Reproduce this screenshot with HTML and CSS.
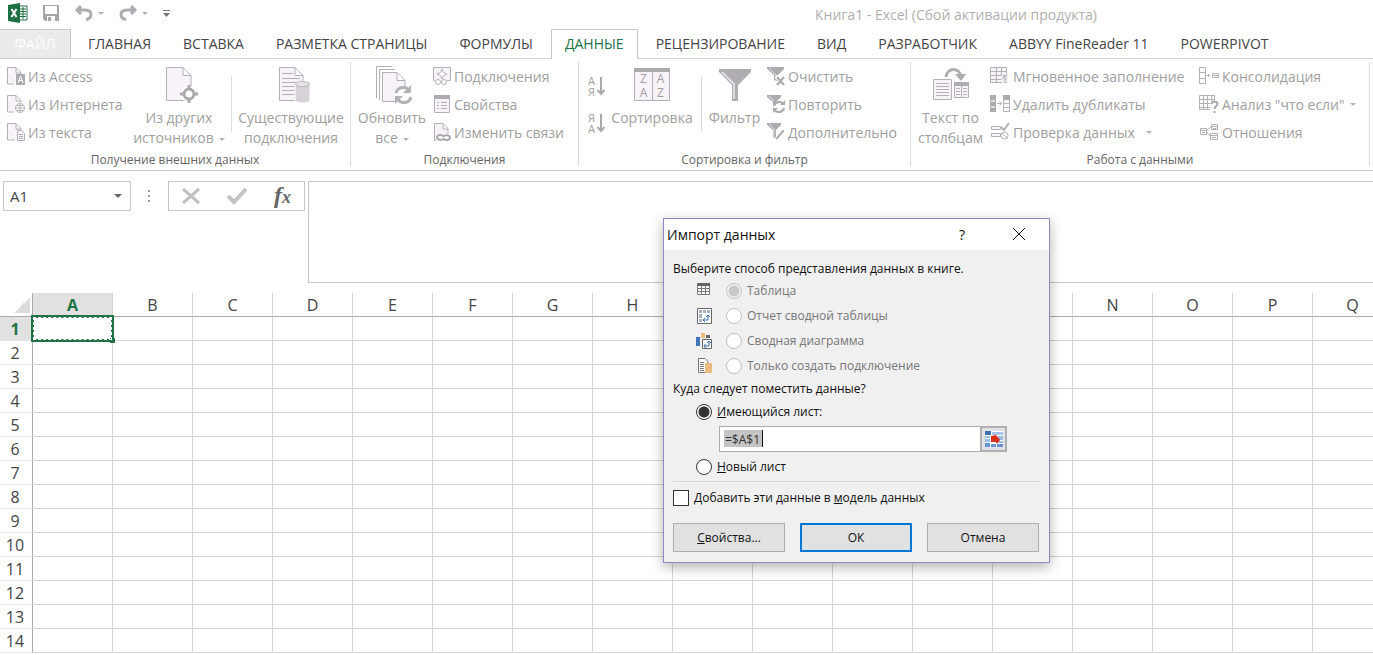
FILE: index.html
```html
<!DOCTYPE html>
<html lang="ru">
<head>
  <meta charset="UTF-8">
  <meta name="viewport" content="width=device-width, initial-scale=1.0">
  <title>Книга1 - Excel</title>
  <link rel="stylesheet" href="styles.css">
</head>
<body>
  <header class="titlebar">
    <div class="quick">
      <svg class="logo" width="20" height="20" viewBox="0 0 20 20">
        <path d="M11 3h8v14h-8z" fill="#fff" stroke="#1e7145"/>
        <path d="M12 6h6M12 8.500h6M12 11h6M12 13.500h6M15 4v12" stroke="#1e7145" fill="none"/>
        <path d="M0 2l12-2v20L0 18z" fill="#1e7145"/>
        <path d="M3.500 6l5 8M8.500 6l-5 8" stroke="#fff" stroke-width="2" fill="none"/>
      </svg>
      <button class="qbtn save" aria-label="Сохранить">
        <svg width="16" height="16" viewBox="0 0 16 16"><path d="M0 0h16v16H2l-2-2z" fill="#a6a4a8"/><path d="M2 1h12v8H2z" fill="#fff"/><path d="M4 11h8v5H4z" fill="#fff"/><path d="M5 12h3v4H5z" fill="#a6a4a8"/></svg>
      </button>
      <button class="qbtn undo" aria-label="Отменить">
        <svg width="18" height="16" viewBox="0 0 18 16"><path d="M6 1L2 5l4 4M2 5h8c4 0 6 2 6 4.500S14 14 11 14.500" fill="none" stroke="#aeacb0" stroke-width="3"/></svg>
        <i class="arrow"></i>
      </button>
      <button class="qbtn redo" aria-label="Вернуть">
        <svg width="18" height="16" viewBox="0 0 18 16"><path d="M12 1l4 4-4 4M16 5H8C4 5 2 7 2 9.500S4 14 7 14.500" fill="none" stroke="#aeacb0" stroke-width="3"/></svg>
        <i class="arrow"></i>
      </button>
      <button class="qbtn more" aria-label="Настройка панели">
        <svg width="7" height="7" viewBox="0 0 7 7"><path d="M0 .500h7" stroke="#777"/><path d="M0 3h7L3.500 7z" fill="#777"/></svg>
      </button>
    </div>
    <div class="title">Книга1 - Excel (Сбой активации продукта)</div>
  </header>

  <nav class="tabs">
    <a href="#" class="file">ФАЙЛ</a>
    <a href="#">ГЛАВНАЯ</a>
    <a href="#">ВСТАВКА</a>
    <a href="#">РАЗМЕТКА СТРАНИЦЫ</a>
    <a href="#">ФОРМУЛЫ</a>
    <a href="#" class="active">ДАННЫЕ</a>
    <a href="#">РЕЦЕНЗИРОВАНИЕ</a>
    <a href="#">ВИД</a>
    <a href="#">РАЗРАБОТЧИК</a>
    <a href="#">ABBYY FineReader 11</a>
    <a href="#">POWERPIVOT</a>
  </nav>

  <section class="ribbon">
    <div class="group g-external">
      <div class="tools">
        <div class="stack">
          <button class="small"><svg class="ic" viewBox="0 0 18 18"><path d="M7 17H.500V.500H9l5 5V7M9 .500V6h5" class="doc"/><path d="M9 7h9v11H9z" class="fill"/><path d="M11 16l2.500-7 2.500 7M12 13.500h3" stroke="#fff" fill="none"/></svg>Из Access</button>
          <button class="small"><svg class="ic" viewBox="0 0 18 18"><path d="M7 17H.500V.500H9l5 5V7M9 .500V6h5" class="doc"/><circle cx="13" cy="13" r="4.500" class="ln white"/><path d="M8.500 13h9M13 8.500v9M9.500 10.500h7M9.500 15.500h7" class="ln"/></svg>Из Интернета</button>
          <button class="small"><svg class="ic" viewBox="0 0 18 18"><path d="M8 17H.500V.500H9l5 5V7M9 .500V6h5" class="doc"/><path d="M10.500 7.500h4l3 3v7h-7zM12 11.500h4M12 13.500h4M12 15.500h4" class="doc"/></svg>Из текста</button>
        </div>
        <button class="big">
          <svg width="34" height="38" viewBox="0 0 34 38"><path d="M4.500 1.500H21l8 8v25H4.500zM21 1.500v8h8" class="doc"/><circle cx="27" cy="28" r="8" fill="#fff"/><circle cx="27" cy="28" r="5" fill="none" stroke="#aba8ad" stroke-width="3"/><path d="M27 19v4M27 33v4M18 28h4M32 28h4" stroke="#aba8ad" stroke-width="3"/></svg>
          <span>Из других<br>источников<i class="arrow"></i></span>
        </button>
        <div class="sep"></div>
        <button class="big">
          <svg width="34" height="38" viewBox="0 0 34 38"><path d="M5.500 1.500H21l8 8v25H5.500zM21 1.500v8h8M8 7.500h11M8 12.500h18M8 16.500h14M8 20.500h14M8 24.500h14M8 28.500h14" class="doc"/><path d="M21 18v16c0 4 15 4 15 0V18c0-3-15-3-15 0z" fill="#d6d2d7" stroke="#fff"/><ellipse cx="28.500" cy="18" rx="7" ry="2.500" fill="#e8e4e9" stroke="#bbb7bc"/></svg>
          <span>Существующие<br>подключения</span>
        </button>
      </div>
      <h2>Получение внешних данных</h2>
    </div>

    <div class="group g-links">
      <div class="tools">
        <button class="big">
          <svg width="36" height="38" viewBox="0 0 36 38"><path d="M2.500 32V.500H18M5.500 34V3.500H21" class="ln"/><path d="M8.500 6.500H23l8 8v21H8.500zM23 6.500v8h8" class="doc"/><circle cx="29" cy="29" r="9" fill="#fff"/><path d="M22 27c2-7 11-7 13-2M37 31c-2 7-11 7-13 2" fill="none" stroke="#b5b2b7" stroke-width="3"/><path d="M37 19v8h-8zM21 38v-8h8z" fill="#b5b2b7"/></svg>
          <span>Обновить<br>все<i class="arrow"></i></span>
        </button>
        <div class="stack">
          <button class="small"><svg class="ic" viewBox="0 0 18 18"><path d="M.500.500h17v13H.500z" class="doc"/><path d="M9 2l1.500 3.500L14 7l-3.500 1.500L9 12 7.500 8.500 4 7l3.500-1.500z" class="ln white"/><path d="M2 13h12v5H2z" fill="#fff"/><circle cx="5" cy="15" r="2.500" class="ln"/><circle cx="11" cy="15" r="2.500" class="ln"/></svg>Подключения</button>
          <button class="small"><svg class="ic" viewBox="0 0 18 18"><path d="M1.500.500h15v17h-15z" class="doc"/><path d="M1 0h16v4H1z" class="fill"/><path d="M4 7.500h2M8 7.500h6M4 10.500h2M8 10.500h6M4 13.500h2M8 13.500h6" class="ln"/></svg>Свойства</button>
          <button class="small"><svg class="ic" viewBox="0 0 18 18"><path d="M1.500.500H10l5 5v12H1.500zM10 .500V6h5" class="doc"/><path d="M3 11h15v7H3z" fill="#fff"/><path d="M11 15c-1 3-7 2-7-.500S9 11 10 13M10 14c1-3 7-2 7 .500S12 18 11 16" fill="none" stroke="#aba8ad" stroke-width="2"/></svg>Изменить связи</button>
        </div>
      </div>
      <h2>Подключения</h2>
    </div>

    <div class="group g-sort">
      <div class="tools">
        <div class="stack sorts">
          <button class="sortbtn" aria-label="Сортировка от А до Я"><span>А<br>Я</span><svg width="8" height="20" viewBox="0 0 8 20"><path d="M4 1v17M.500 14L4 18l3.500-4" fill="none" stroke="#aaa" stroke-width="2"/></svg></button>
          <button class="sortbtn" aria-label="Сортировка от Я до А"><span>Я<br>А</span><svg width="8" height="20" viewBox="0 0 8 20"><path d="M4 1v17M.500 14L4 18l3.500-4" fill="none" stroke="#aaa" stroke-width="2"/></svg></button>
        </div>
        <button class="big">
          <span class="sorticon"><b>Z<br>A</b><b>A<br>Z</b></span>
          <span>Сортировка</span>
        </button>
        <div class="sep"></div>
        <button class="big filter">
          <svg width="34" height="38" viewBox="0 0 34 38"><path d="M1 3h32v3L20 19v16h-6V19L1 6z" fill="#b0adb2"/><path d="M4 6l12 12v15" stroke="#dedbe0" fill="none" stroke-width="2"/></svg>
          <span>Фильтр</span>
        </button>
        <div class="stack">
          <button class="small"><svg class="ic" viewBox="0 0 18 18"><path d="M0 0h17v2l-6 6v7l-4-2V8L0 2z" class="fill"/><path d="M2 1l7 7v6" stroke="#e4e1e6" fill="none"/><path d="M9 9l9 9M18 9l-9 9" stroke="#fff" stroke-width="4"/><path d="M10 10l7 8M17 10l-7 8" stroke="#aba8ad" stroke-width="2"/></svg>Очистить</button>
          <button class="small"><svg class="ic" viewBox="0 0 18 18"><path d="M0 0h14v2L9 7v6l-3-2V7L0 2z" class="fill"/><path d="M2 1l5 5" stroke="#e4e1e6" fill="none"/><circle cx="12" cy="12" r="6" fill="#fff"/><path d="M7 11c1-5 8-5 9-2M17 13c-1 5-8 5-9 2" fill="none" stroke="#aba8ad" stroke-width="2"/><path d="M18 5v5h-5zM6 18v-5h5z" class="fill"/></svg>Повторить</button>
          <button class="small"><svg class="ic" viewBox="0 0 18 18"><path d="M0 0h14v2L9 7v9l-3-2V7L0 2z" class="fill"/><path d="M2 1l5 5v8" stroke="#e4e1e6" fill="none"/><path d="M8 18l1-4 7-8 2 2-7 8z" fill="#aba8ad" stroke="#fff"/></svg>Дополнительно</button>
        </div>
      </div>
      <h2>Сортировка и фильтр</h2>
    </div>

    <div class="group g-data">
      <div class="tools">
        <button class="big">
          <svg width="36" height="38" viewBox="0 0 36 38"><path d="M.500 13.500h18v20H.500zM3 17.500h13M3 20.500h13M3 23.500h13M3 26.500h13M3 29.500h13M21.500 17.500h14v14h-14zM28.500 18v13M23 22.500h4M30 22.500h4M23 25.500h4M30 25.500h4M23 28.500h4M30 28.500h4" class="doc"/><path d="M21 16h15v4H21z" class="fill"/><path d="M13 11c1-10 14-10 15 0" fill="none" stroke="#b0adb2" stroke-width="3"/><path d="M22 8h11l-5 7z" class="fill"/></svg>
          <span>Текст по<br>столбцам</span>
        </button>
        <div class="stack">
          <button class="small"><svg class="ic" viewBox="0 0 20 18"><path d="M.500.500h16v15H.500zM1 4.500h15M1 8.500h15M1 12.500h15M6.500 1v15M11.500 1v7" class="doc"/><path d="M13 7h6l-3 4h3l-8 7 3-6h-3z" fill="#c4c1c6" stroke="#fff"/></svg>Мгновенное заполнение</button>
          <button class="small"><svg class="ic" viewBox="0 0 20 18"><path d="M0 0h6v17H0z" class="fill"/><path d="M1 6h4M1 12h4" stroke="#ddd" stroke-width="2"/><path d="M7 8.500h4M9.500 6.500l2 2-2 2M13.500.500h6v16h-6zM13 4.500h7M13 8.500h7M13 12.500h7" class="ln"/><path d="M13 0h7v5h-7z" class="fill"/></svg>Удалить дубликаты</button>
          <button class="small"><svg class="ic" viewBox="0 0 20 18"><path d="M1.500 3.500h9v3h-9zM1.500 10.500h9v3h-9z" class="doc"/><path d="M11 4l3 3 5-7" fill="none" stroke="#b4b1b6" stroke-width="2"/><circle cx="14.500" cy="12.500" r="3.500" class="ln white"/><path d="M12 10l5 5" class="ln"/></svg>Проверка данных<i class="arrow wide"></i></button>
        </div>
        <div class="stack">
          <button class="small"><svg class="ic" viewBox="0 0 20 18"><path d="M.500.500h6v16h-6zM0 5.500h7M0 11.500h7M8 8.500h3M9.500 7v3M13.500 6.500h6v4h-6zM13 8.500h6" class="ln"/></svg>Консолидация</button>
          <button class="small"><svg class="ic" viewBox="0 0 20 18"><path d="M.500.500h15v14H.500zM0 4.500h16M0 8.500h16M0 12.500h11M4.500 1v14M8.500 1v14M12.500 1v6" class="ln"/><path d="M11 6h8v12h-8z" fill="#fff"/><path d="M12.500 9c0-3 6-3 6 0 0 2-3 2-3 5M15.500 16v2" fill="none" stroke="#aba8ad" stroke-width="2"/></svg>Анализ "что если"<i class="arrow"></i></button>
          <button class="small"><svg class="ic" viewBox="0 0 20 18"><path d="M1.500 5.500h6v6h-6zM1 7.500h7M12.500 1.500h6v5h-6zM12 3.500h7M11.500 10.500h7v6h-7zM11 12.500h8M3 9.500h3M14 5.500h3M13 14.500h4M8 7l4-3M8 9l3 4" class="ln"/></svg>Отношения</button>
        </div>
      </div>
      <h2>Работа с данными</h2>
    </div>
  </section>

  <section class="formula">
    <button class="namebox">A1<i class="arrow dark"></i></button>
    <span class="dots"></span>
    <div class="fxbox">
      <button aria-label="Отмена ввода"><svg width="18" height="16" viewBox="0 0 18 16"><path d="M1 1l16 14M17 1L1 15" stroke="#c0c0c0" stroke-width="3" fill="none"/></svg></button>
      <button aria-label="Ввод"><svg width="20" height="16" viewBox="0 0 20 16"><path d="M1 8l6 6L19 1" stroke="#c4c4c4" stroke-width="4" fill="none"/></svg></button>
      <button class="fx">f<small>x</small></button>
    </div>
    <textarea class="input" aria-label="Строка формул"></textarea>
  </section>

  <main class="sheet">
    <table id="grid">
      <thead><tr><th class="corner"></th></tr></thead>
      <tbody></tbody>
    </table>
  </main>

  <form class="dialog" role="dialog" aria-label="Импорт данных">
    <div class="caption">
      <span>Импорт данных</span>
      <button type="button" class="help">?</button>
      <button type="button" class="close" aria-label="Закрыть"><svg width="14" height="14" viewBox="0 0 14 14"><path d="M1 1l12 12M13 1L1 13" stroke="#111" fill="none"/></svg></button>
    </div>
    <div class="content">
      <p>Выберите способ представления данных в книге.</p>
      <div class="kinds">
        <div class="option">
          <svg width="16" height="16" viewBox="0 0 16 16"><path d="M1.500 1.500h12v10h-12zM1 5.500h13M1 8.500h13M5.500 2v10M9.500 2v10" fill="#fff" stroke="#777"/><path d="M1 0h13v3H1z" fill="#666"/></svg>
          <input type="radio" name="kind" id="k1" checked disabled><label for="k1">Таблица</label>
        </div>
        <div class="option">
          <svg width="16" height="16" viewBox="0 0 16 16"><path d="M1.500.500h14v15h-14z" fill="#fff" stroke="#666"/><path d="M3 2h3v3H3zM7 2h3v3H7zM11 2h3v3h-3zM3 6h3v4H3zM3 11h3v3H3z" fill="#aab4c0"/><path d="M7 12h5V7M9 10l-2 2 2 2M10 9l2-2 2 2" stroke="#3a6ea5" fill="none"/></svg>
          <input type="radio" name="kind" id="k2" disabled><label for="k2">Отчет сводной таблицы</label>
        </div>
        <div class="option">
          <svg width="16" height="16" viewBox="0 0 16 16"><path d="M0 4h4v9H0z" fill="#4472b8"/><path d="M5 0h4v5H5z" fill="#e8bd7e"/><path d="M10 2h4v3h-4z" fill="#666"/><path d="M6.500 6.500h9v9h-9z" fill="#fff" stroke="#666"/><path d="M8 13h5V9M9.500 11L8 13l1.500 2M11 10l2-2 2 2" stroke="#3a6ea5" fill="none"/></svg>
          <input type="radio" name="kind" id="k3" disabled><label for="k3">Сводная диаграмма</label>
        </div>
        <div class="option">
          <svg width="16" height="16" viewBox="0 0 16 16"><path d="M2.500.500H9l3 3v11H2.500zM4 4.500h4M4 6.500h4M4 8.500h4M4 10.500h4M4 12.500h4" fill="#fff" stroke="#777"/><path d="M9 5h7v10H9z" fill="#e8bd7e"/></svg>
          <input type="radio" name="kind" id="k4" disabled><label for="k4">Только создать подключение</label>
        </div>
      </div>
      <p>Куда следует поместить данные?</p>
      <div class="place">
        <div class="option"><input type="radio" name="place" id="p1" checked><label for="p1"><u>И</u>меющийся лист:</label></div>
        <div class="ref">
          <input type="text" value="=$A$1" aria-label="Диапазон">
          <button type="button" aria-label="Выбрать диапазон"><svg width="18" height="16" viewBox="0 0 18 16"><path d="M0 0h18v16H0z" fill="#fff"/><path d="M0 0h6v4H0z" fill="#3d6fb5"/><path d="M7 1h11v3H7z" fill="#a9c4e8"/><path d="M0 5h5v2H0zM13 5h5v4h-5zM0 8h5v3H0zM13 10h5v2h-5z" fill="#9bbce6"/><path d="M0 12h5v4H0zM6 13h5v3H6zM12 13h6v3h-6z" fill="#6a94cf"/><path d="M6 5l5-1 4 5-3 4-1-2H6z" fill="#d8301c"/></svg></button>
        </div>
        <div class="option"><input type="radio" name="place" id="p2"><label for="p2"><u>Н</u>овый лист</label></div>
      </div>
      <div class="option model"><input type="checkbox" id="model"><label for="model">Добавить эти данные в <u>м</u>одель данных</label></div>
      <div class="actions">
        <button type="button"><u>С</u>войства...</button>
        <button type="button" class="ok">ОК</button>
        <button type="button">Отмена</button>
      </div>
    </div>
  </form>

  <script src="grid.js"></script>
</body>
</html>
```
FILE: styles.css
```css
* {
  box-sizing: border-box;
}

body {
  margin: 0;
  height: 100vh;
  overflow: hidden;
  display: flex;
  flex-direction: column;
  background: #fff;
  color: #444;
  font-family: 'Open Sans', 'Noto Sans', sans-serif;
  font-size: 14px;
}

button {
  background: none;
  border: none;
  padding: 0;
  margin: 0;
  color: inherit;
  font: inherit;
}

svg {
  flex: none;
  overflow: visible;
}

.arrow {
  display: inline-block;
  flex: none;
  margin-left: 5px;
  vertical-align: middle;
  border: 3px solid transparent;
  border-top-color: #b4b4b4;
  border-bottom: none;
}

.arrow.wide {
  margin-left: 11px;
}

.arrow.dark {
  border-width: 4px;
  border-bottom: none;
  border-top-color: #666;
}

/* title bar */
.titlebar {
  height: 29px;
  flex: none;
  display: flex;
  align-items: center;
}

.quick {
  display: flex;
  align-items: center;
  width: 539px;
  padding: 0 0 3px 8px;
}

.qbtn {
  display: flex;
  align-items: center;
}

.save {
  margin-left: 15px;
}

.undo {
  margin-left: 16px;
}

.redo {
  margin-left: 15px;
}

.more {
  margin-left: 15px;
}

.title {
  flex: 1;
  text-align: center;
  color: #b0b0b0;
}

/* tabs */
.tabs {
  height: 30px;
  flex: none;
  display: flex;
  border-bottom: 1px solid #d0d0d0;
}

.tabs a {
  height: 30px;
  line-height: 28px;
  padding: 0 15px;
  border: 1px solid transparent;
  border-bottom: none;
  color: #444;
  text-decoration: none;
  white-space: nowrap;
}

.tabs .file {
  width: 71px;
  height: 29px;
  margin-right: 1px;
  padding: 0;
  text-align: center;
  background: #ebebeb;
  border-color: #c8c8c8;
  border-left: none;
  color: #fff;
}

.tabs .active {
  margin: 0 2px;
  padding: 0 13px;
  background: #fff;
  border-color: #c8c8c8;
  color: #217346;
}

/* ribbon */
.ribbon {
  height: 112px;
  flex: none;
  display: flex;
  padding: 3px 0 4px;
  border-bottom: 1px solid #c8c8c8;
  color: #a0a0a0;
}

.group {
  flex: none;
  display: flex;
  flex-direction: column;
  border-right: 1px solid #dcdcdc;
}

.g-external {
  width: 351px;
}

.g-links {
  width: 228px;
}

.g-sort {
  width: 332px;
}

.g-data {
  width: 459px;
}

.group h2 {
  margin: 0;
  text-align: center;
  font-size: 12px;
  font-weight: normal;
  line-height: 12px;
  color: #666;
}

.tools {
  display: grid;
  height: 92px;
}

.g-external .tools {
  grid-template-columns: 127px 104px 1px 118px;
}

.g-links .tools {
  grid-template-columns: 82px 1fr;
}

.g-sort .tools {
  grid-template-columns: 24px 98px 1px 65px 1fr;
}

.g-data .tools {
  grid-template-columns: 79px 209px 1fr;
}

.stack {
  display: flex;
  flex-direction: column;
}

.g-external .stack {
  padding-left: 7px;
}

.small {
  height: 28px;
  display: flex;
  align-items: center;
  white-space: nowrap;
}

.ic {
  width: 18px;
  height: 18px;
  margin-right: 3px;
}

.g-data .ic {
  width: 20px;
}

.doc {
  fill: #f7f3f8;
  stroke: #b4b1b6;
}

.ln {
  fill: none;
  stroke: #b4b1b6;
}

.white {
  fill: #fff;
}

.fill {
  fill: #aeabb0;
}

.big {
  display: flex;
  flex-direction: column;
  align-items: center;
  padding-top: 4px;
  line-height: 20px;
  white-space: nowrap;
}

.big svg {
  margin-bottom: 4px;
}

.sep {
  background: #dcdcdc;
  height: 56px;
  margin-top: 14px;
}

.sorts {
  padding: 13px 0 0 9px;
  gap: 15px;
}

.sortbtn {
  display: flex;
  align-items: center;
  gap: 2px;
  height: 22px;
  font-size: 11px;
  line-height: 11px;
}

.sorticon {
  display: flex;
  justify-content: space-around;
  width: 36px;
  height: 33px;
  margin: 2px 0 7px;
  border: 1px solid #b4b1b6;
  border-top: 4px solid #aeabb0;
  background: linear-gradient(#b4b1b6, #b4b1b6) center / 1px 100% no-repeat #f7f3f8;
  font-size: 12px;
  line-height: 14px;
}

.sorticon b {
  font-weight: normal;
}

/* formula bar */
.formula {
  flex: none;
  display: flex;
  align-items: flex-start;
  padding: 10px 0 0 3px;
}

.namebox {
  width: 128px;
  height: 30px;
  display: flex;
  align-items: center;
  justify-content: space-between;
  padding: 0 8px 0 6px;
  border: 1px solid #c6c6c6;
  font-size: 15px;
}

.dots {
  width: 2px;
  height: 12px;
  margin: 9px 18px 0 17px;
  background: repeating-linear-gradient(#999 0 2px, transparent 2px 5px);
}

.fxbox {
  width: 137px;
  height: 30px;
  display: flex;
  align-items: center;
  justify-content: space-between;
  padding: 0 13px;
  border: 1px solid #c6c6c6;
}

.fxbox button {
  display: flex;
}

.fxbox .fx {
  align-items: baseline;
  font: italic bold 24px/26px 'Liberation Serif', serif;
  color: #666;
}

.fx small {
  font-size: 18px;
}

.input {
  flex: 1;
  height: 102px;
  margin-left: 3px;
  border: 1px solid #c6c6c6;
  border-right: none;
  resize: none;
  outline: none;
}

/* sheet */
.sheet {
  flex: 1;
  min-height: 0;
  padding-top: 10px;
  overflow: hidden;
}

table {
  width: 1393px;
  table-layout: fixed;
  border-collapse: separate;
  border-spacing: 0;
  font-size: 16px;
}

th,
td {
  width: 80px;
  height: 24px;
  padding: 0;
  line-height: 22px;
  font-weight: normal;
  text-align: center;
  border-right: 1px solid #d4d4d4;
  border-bottom: 1px solid #d4d4d4;
}

thead th {
  border-bottom-color: #ababab;
}

tbody th,
.corner {
  width: 33px;
  padding-right: 2px;
  border-right-color: #ababab;
}

tbody th {
  border-bottom-color: #e4e4e4;
}

.corner {
  border-color: #ababab;
  background: linear-gradient(135deg, transparent 50%, #dcdcdc 50%) 14px 4px / 16px 16px no-repeat;
}

.picked {
  background: #e1e1e1;
  color: #217346;
  font-weight: bold;
}

.cell-active {
  position: relative;
}

.cell-active::before {
  content: '';
  position: absolute;
  inset: -2px;
  border: 3px solid #217346;
}

.cell-active::after {
  content: '';
  position: absolute;
  inset: 0;
  border: 1px dashed #fff;
}

.handle {
  position: absolute;
  right: -3px;
  bottom: -3px;
  width: 5px;
  height: 5px;
  background: #217346;
}

/* import dialog */
.dialog {
  position: absolute;
  left: 663px;
  top: 218px;
  width: 387px;
  border: 1px solid #9488c0;
  background: #f0f0f0;
  box-shadow: 0 4px 12px rgba(0, 0, 0, 0.3);
  color: #111;
  font-size: 12px;
}

.caption {
  height: 31px;
  display: flex;
  align-items: center;
  padding: 0 0 1px 3px;
  background: #fff;
  font-size: 14px;
}

.caption span {
  flex: 1;
}

.help {
  width: 20px;
}

.close {
  display: flex;
  margin: 0 23px 0 40px;
}

.content {
  padding: 10px 9px;
}

.content p {
  margin: 0;
  line-height: 18px;
}

.option {
  height: 25px;
  display: flex;
  align-items: center;
}

.kinds {
  padding-left: 23px;
  margin-bottom: 2px;
  color: #777;
}

.kinds svg {
  margin-right: 14px;
}

.option input {
  appearance: none;
  flex: none;
  width: 16px;
  height: 16px;
  margin: 0 5px 0 0;
  border: 1px solid #333;
  background: #fff;
}

.option input[type="radio"] {
  border-radius: 50%;
}

.option input:disabled {
  border-color: #c0c0c0;
}

.option input:checked {
  background: radial-gradient(circle, #333 0 5px, #fff 6px);
}

.option input:checked:disabled {
  background: radial-gradient(circle, #c8c8c8 0 5px, #f6f6f6 6px);
}

.place {
  padding: 1px 0 2px 23px;
  border-bottom: 1px solid #d8d8d8;
}

.ref {
  display: flex;
  width: 288px;
  height: 26px;
  margin: 2px 0 2px 23px;
}

.ref input {
  flex: 1;
  min-width: 0;
  padding: 0 0 0 5px;
  border: 1px solid #aaa;
  border-right: none;
  /* selected reference with the caret after it */
  background:
    linear-gradient(#111, #111) 42px 3px / 1px 17px no-repeat,
    linear-gradient(#c4c4c4, #c4c4c4) 4px 3px / 38px 17px no-repeat,
    #fff;
  color: #333;
  font: inherit;
}

.ref button {
  width: 27px;
  display: flex;
  align-items: center;
  justify-content: center;
  border: 2px solid #b0b0b0;
  background: #e0e0e8;
}

.model {
  margin-top: 3px;
}

.actions {
  display: flex;
  justify-content: space-between;
  margin: 13px 1px 0 0;
}

.actions button {
  width: 112px;
  height: 29px;
  border: 1px solid #adadad;
  background: #e1e1e1;
}

.actions .ok {
  border: 2px solid #0078d7;
}
```
FILE: grid.js
```js
const columns = 'ABCDEFGHIJKLMNOPQ'.split('');
const head = document.querySelector('#grid thead tr');
const body = document.querySelector('#grid tbody');

columns.forEach((name, i) => {
  const th = document.createElement('th');
  th.textContent = name;
  if (i === 0) th.className = 'picked';
  head.appendChild(th);
});

for (let row = 1; row <= 14; row++) {
  const tr = document.createElement('tr');
  const th = document.createElement('th');
  th.textContent = row;
  if (row === 1) th.className = 'picked';
  tr.appendChild(th);
  columns.forEach((name, i) => {
    const td = document.createElement('td');
    if (row === 1 && i === 0) {
      td.className = 'cell-active';
      td.innerHTML = '<span class="handle"></span>';
    }
    tr.appendChild(td);
  });
  body.appendChild(tr);
}
```
